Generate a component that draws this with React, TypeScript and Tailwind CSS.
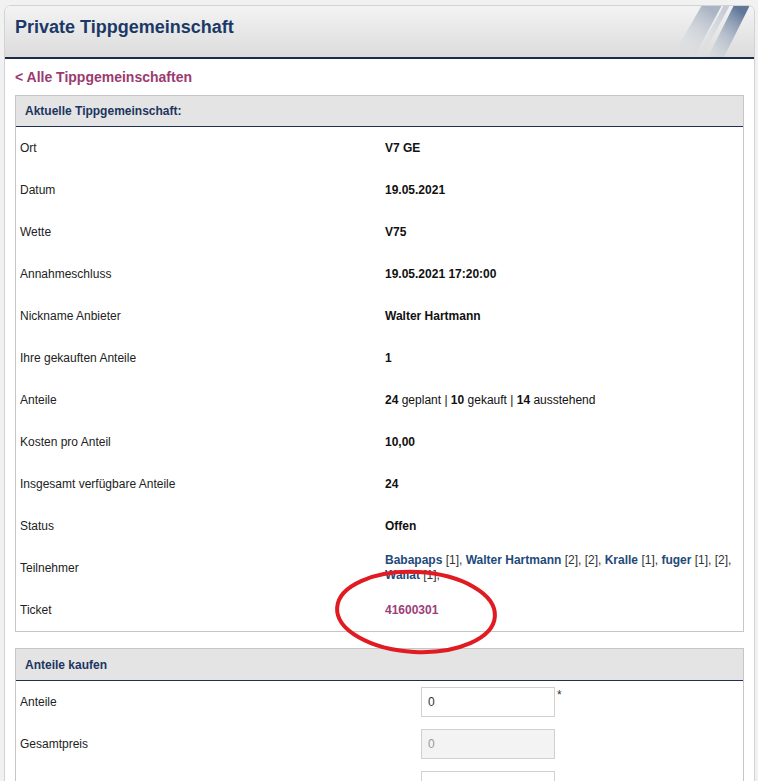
import React from "react"

const rows: { label: string; value: React.ReactNode }[] = [
  { label: "Ort", value: <b>V7 GE</b> },
  { label: "Datum", value: <b>19.05.2021</b> },
  { label: "Wette", value: <b>V75</b> },
  { label: "Annahmeschluss", value: <b>19.05.2021 17:20:00</b> },
  { label: "Nickname Anbieter", value: <b>Walter Hartmann</b> },
  { label: "Ihre gekauften Anteile", value: <b>1</b> },
  {
    label: "Anteile",
    value: (
      <span>
        <b>24</b> geplant | <b>10</b> gekauft | <b>14</b> ausstehend
      </span>
    ),
  },
  { label: "Kosten pro Anteil", value: <b>10,00</b> },
  { label: "Insgesamt verfügbare Anteile", value: <b>24</b> },
  { label: "Status", value: <b>Offen</b> },
]

const participants = [
  { name: "Babapaps", shares: "[1], " },
  { name: "Walter Hartmann", shares: "[2], [2], " },
  { name: "Kralle", shares: "[1], " },
  { name: "fuger", shares: "[1], [2], " },
  { name: "Wallat", shares: "[1]," },
]

function Stripes() {
  return (
    <svg width="80" height="52" viewBox="0 0 80 52" className="absolute right-[2px] bottom-0">
      <defs>
        <linearGradient id="s1" x1="0" y1="1" x2="0.6" y2="0">
          <stop offset="0" stopColor="#e4e6ea" stopOpacity="0" />
          <stop offset="1" stopColor="#aab4c4" />
        </linearGradient>
        <linearGradient id="s2" x1="0" y1="1" x2="0.6" y2="0">
          <stop offset="0" stopColor="#c8d0dc" stopOpacity="0.2" />
          <stop offset="1" stopColor="#5f7698" />
        </linearGradient>
      </defs>
      <polygon points="0,52 22,52 50,0 30,0" fill="url(#s1)" />
      <polygon points="24,52 30,52 58,0 52,0" fill="url(#s1)" opacity="0.6" />
      <polygon points="36,52 52,52 78,0 62,0" fill="url(#s2)" />
    </svg>
  )
}

function PanelHeader({ title, tall }: { title: string; tall?: boolean }) {
  return (
    <div
      className={`${tall ? "h-[32px]" : "h-[31px]"} bg-[#e4e4e4] border-b border-[#1e3150] flex items-center px-[9px] text-[12px] font-bold text-[#1c3560]`}
    >
      {title}
    </div>
  )
}

export default function App() {
  return (
    <div className="min-h-[781px] bg-[#f1f1f1] pl-[4px] pr-[3px] pt-[5px] font-['Liberation_Sans',Arial,sans-serif] text-[12px] text-[#222]">
      <div className="bg-white border border-[#d2d2d2] rounded-t-[7px] overflow-hidden min-h-[776px]">
        <div className="relative h-[53px] bg-gradient-to-b from-[#f3f3f3] to-[#dcdcdc] border-b-2 border-[#1a2c4a] flex items-center px-[10px]">
          <h1 className="text-[18px] font-bold text-[#1b3966] -mt-[8px]">Private Tippgemeinschaft</h1>
          <Stripes />
        </div>

        <div className="px-[10px]">
          <div className="h-[36px] flex items-center text-[14px] font-bold text-[#9b3a70]">&lt; Alle Tippgemeinschaften</div>

          <div className="relative border border-[#c6c6c6]">
            <PanelHeader title="Aktuelle Tippgemeinschaft:" />
            <div className="grid grid-cols-[365px_1fr]">
              {rows.map((r) => (
                <React.Fragment key={r.label}>
                  <div className="h-[42px] flex items-center pl-[4px]">{r.label}</div>
                  <div className="h-[42px] flex items-center pl-[4px] text-[#111]">{r.value}</div>
                </React.Fragment>
              ))}
              <div className="h-[42px] flex items-center pl-[4px]">Teilnehmer</div>
              <div className="h-[42px] flex items-center pl-[4px] pr-[8px] leading-[15px] text-[#333]">
                <span>
                  {participants.map((p) => (
                    <React.Fragment key={p.name}>
                      <b className="text-[#1e4a7a]">{p.name}</b> {p.shares}
                    </React.Fragment>
                  ))}
                </span>
              </div>
              <div className="h-[42px] flex items-center pl-[4px]">Ticket</div>
              <div className="h-[42px] flex items-center pl-[4px] font-bold text-[#9b4077]">41600301</div>
            </div>
            <svg width="170" height="94" viewBox="0 0 170 94" className="absolute left-[316px] top-[469px] pointer-events-none">
              <ellipse cx="84" cy="47" rx="79" ry="40" transform="rotate(3 84 47)" fill="none" stroke="#e01b22" strokeWidth="4" />
            </svg>
          </div>

          <div className="mt-[16px] border border-[#c6c6c6]">
            <PanelHeader title="Anteile kaufen" tall />
            <div className="grid grid-cols-[405px_1fr]">
              <div className="h-[42px] flex items-center pl-[4px]">Anteile</div>
              <div className="h-[42px] flex items-center gap-[2px]">
                <input defaultValue="0" className="w-[134px] h-[30px] border border-[#d0d0d0] px-[6px] text-[12px] text-[#333] bg-white" />
                <span className="self-start mt-[5px] text-[#333]">*</span>
              </div>
              <div className="h-[42px] flex items-center pl-[4px]">Gesamtpreis</div>
              <div className="h-[42px] flex items-center">
                <input disabled defaultValue="0" className="w-[134px] h-[30px] border border-[#d0d0d0] px-[6px] text-[12px] text-[#999] bg-[#f3f3f3]" />
              </div>
              <div className="h-[42px] flex items-center pl-[4px]">Partner-Nickname</div>
              <div className="h-[42px] flex items-center">
                <input className="w-[134px] h-[30px] border border-[#d0d0d0] px-[6px] text-[12px] bg-white" />
              </div>
            </div>
          </div>
        </div>
      </div>
    </div>
  )
}
